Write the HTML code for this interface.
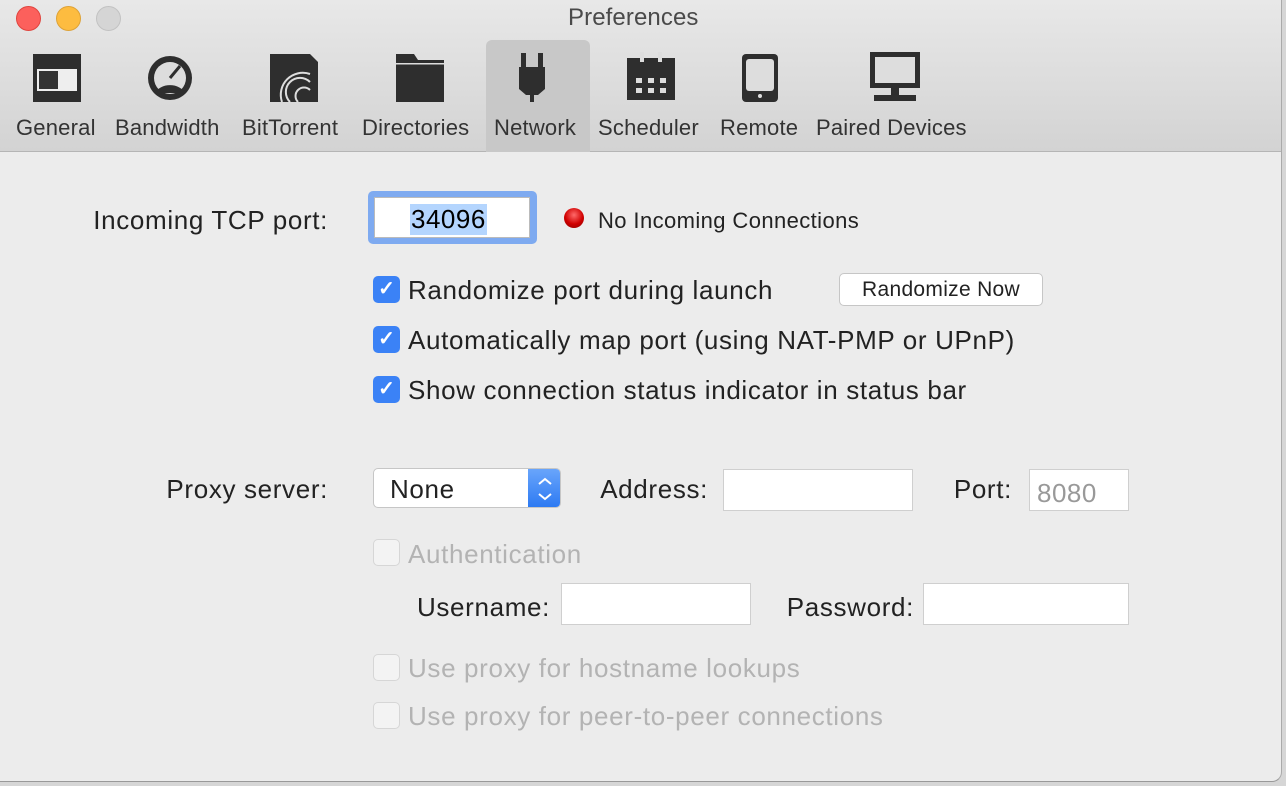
<!DOCTYPE html>
<html><head><meta charset="utf-8"><style>
*{margin:0;padding:0;box-sizing:border-box}
body{width:1286px;height:786px;background:#d6d6d6;font-family:"Liberation Sans",sans-serif;position:relative;overflow:hidden;color:#222}
.win{position:absolute;left:0;top:0;width:1282px;height:782px;background:#ececec;border-radius:0 0 10px 0;border-right:1px solid #aaa;border-bottom:1px solid #999;overflow:hidden}
.tb{position:absolute;left:0;top:0;width:100%;height:152px;background:linear-gradient(#e8e8e8,#d3d3d3);border-bottom:1px solid #b5b5b5}
.a{position:absolute;white-space:nowrap}
.r{position:absolute;white-space:nowrap;text-align:right}
.dot{position:absolute;top:6px;width:25px;height:25px;border-radius:50%}
.tl{font-size:22px;letter-spacing:0.2px;color:#333;top:115px}
.sel{position:absolute;left:486px;top:40px;width:104px;height:112px;background:#c8c8c8;border-radius:6px 6px 0 0}
.lab{font-size:26px;letter-spacing:0.65px;color:#222}
.cb{position:absolute;width:27px;height:27px;border-radius:5px;background:#3b82f6;color:#fff;font-size:20px;text-align:center;line-height:27px;font-weight:bold}
.cbd{position:absolute;width:27px;height:27px;border-radius:5px;background:#f3f3f3;border:1px solid #d6d6d6}
.dis{color:#b3b3b3}
.fld{position:absolute;background:#fff;border:1px solid #cfcfcf}
</style></head><body>
<div class="win">
<div class="tb"></div>
<div class="dot" style="left:16px;background:#fc605c;border:1px solid #e0443e"></div>
<div class="dot" style="left:56px;background:#fdbc40;border:1px solid #dea236"></div>
<div class="dot" style="left:96px;background:#d5d5d5;border:1px solid #c2c2c2"></div>
<div class="a" style="left:568px;top:4px;font-size:24px;letter-spacing:0.1px;color:#4a4a4a">Preferences</div>
<div class="sel"></div>
<svg class="a" style="left:0;top:48px" width="1000" height="58" viewBox="0 0 1000 58">
<g fill="#2e2e2e">
<rect x="33" y="6" width="48" height="48"/>
<rect x="37" y="21" width="40" height="22" fill="#eee"/><rect x="39" y="23" width="19" height="18" fill="#333"/>
<circle cx="170" cy="30" r="22"/><circle cx="170" cy="30" r="16" fill="#ddd"/><path d="M155 45a16 12 0 0 1 30 0z"/><path d="M170 30l10-12" stroke="#2e2e2e" stroke-width="3"/>
<path d="M270 6h40l8 8v40h-48z"/><path d="M282 54a22 22 0 0 1 28-28M290 54a14 14 0 0 1 20-20M298 54a6 6 0 0 1 12-12" stroke="#ddd" stroke-width="2" fill="none"/>
<path d="M396 6h18l4 6h26v42h-48z"/><rect x="396" y="15" width="48" height="1.5" fill="#ddd"/>
<rect x="521" y="5" width="5" height="14"/><rect x="538" y="5" width="5" height="14"/><path d="M519 19h26v22l-7 6h-12l-7-6z"/><rect x="530" y="46" width="4" height="8"/>
<path d="M627 10h48v42h-48z"/><rect x="640" y="4" width="4" height="10" fill="#ddd"/><rect x="658" y="4" width="4" height="10" fill="#ddd"/>
<g fill="#ddd"><rect x="636" y="30" width="6" height="5"/><rect x="648" y="30" width="6" height="5"/><rect x="660" y="30" width="6" height="5"/><rect x="636" y="40" width="6" height="5"/><rect x="648" y="40" width="6" height="5"/><rect x="660" y="40" width="6" height="5"/></g>
<rect x="742" y="6" width="36" height="48" rx="4"/><rect x="746" y="11" width="28" height="32" rx="3" fill="#ddd"/><circle cx="760" cy="48" r="2" fill="#ddd"/>
<rect x="870" y="4" width="50" height="36"/><rect x="875" y="9" width="40" height="26" fill="#ddd"/><rect x="891" y="40" width="8" height="8"/><rect x="874" y="47" width="42" height="6"/>
</g></svg>
<div class="a tl" style="left:16px">General</div>
<div class="a tl" style="left:115px">Bandwidth</div>
<div class="a tl" style="left:242px">BitTorrent</div>
<div class="a tl" style="left:362px">Directories</div>
<div class="a tl" style="left:494px">Network</div>
<div class="a tl" style="left:598px">Scheduler</div>
<div class="a tl" style="left:720px">Remote</div>
<div class="a tl" style="left:816px">Paired Devices</div>

<div class="r lab" style="right:953px;top:205px">Incoming TCP port:</div>
<div class="a" style="left:368px;top:191px;width:169px;height:53px;border-radius:5px;background:#7eaaf0"></div>
<div class="a" style="left:374px;top:197px;width:156px;height:41px;background:#fff;border:1px solid #bbb"></div>
<div class="a" style="left:410px;top:204px;font-size:26px;letter-spacing:0.5px;color:#000;background:#b4d5fe;padding:0 1px">34096</div>
<div class="a" style="left:564px;top:208px;width:20px;height:20px;border-radius:50%;background:radial-gradient(circle at 50% 35%,#ff6a6a,#d00000 55%,#800 100%)"></div>
<div class="a" style="left:598px;top:208px;font-size:22px;letter-spacing:0.4px">No Incoming Connections</div>

<div class="cb" style="left:373px;top:276px">✓</div>
<div class="a lab" style="left:408px;top:275px">Randomize port during launch</div>
<div class="a" style="left:839px;top:273px;width:204px;height:33px;background:#fff;border:1px solid #c6c6c6;border-radius:5px;font-size:21px;letter-spacing:0.3px;text-align:center;line-height:31px">Randomize Now</div>
<div class="cb" style="left:373px;top:326px">✓</div>
<div class="a lab" style="left:408px;top:325px">Automatically map port (using NAT-PMP or UPnP)</div>
<div class="cb" style="left:373px;top:376px">✓</div>
<div class="a lab" style="left:408px;top:375px">Show connection status indicator in status bar</div>

<div class="r lab" style="right:953px;top:474px">Proxy server:</div>
<div class="a" style="left:373px;top:468px;width:188px;height:40px;background:#fff;border:1px solid #c6c6c6;border-radius:5px;overflow:hidden">
<div class="a lab" style="left:16px;top:5px">None</div>
<div class="a" style="left:154px;top:0;width:34px;height:40px;background:linear-gradient(#69a5fb,#2a78f2)"></div>
<svg class="a" style="left:162px;top:6px" width="18" height="28"><path d="M3 9l6-5 6 5M3 19l6 5 6-5" stroke="#fff" stroke-width="2" fill="none"/></svg>
</div>
<div class="r lab" style="right:573px;top:474px">Address:</div>
<div class="fld" style="left:723px;top:469px;width:190px;height:42px"></div>
<div class="r lab" style="right:269px;top:474px">Port:</div>
<div class="fld" style="left:1029px;top:469px;width:100px;height:42px"></div>
<div class="a" style="left:1037px;top:478px;font-size:26px;letter-spacing:0.5px;color:#999">8080</div>

<div class="cbd" style="left:373px;top:539px"></div>
<div class="a lab dis" style="left:408px;top:539px">Authentication</div>
<div class="r lab" style="right:731px;top:592px">Username:</div>
<div class="fld" style="left:561px;top:583px;width:190px;height:42px"></div>
<div class="r lab" style="right:367px;top:592px">Password:</div>
<div class="fld" style="left:923px;top:583px;width:206px;height:42px"></div>
<div class="cbd" style="left:373px;top:654px"></div>
<div class="a lab dis" style="left:408px;top:653px">Use proxy for hostname lookups</div>
<div class="cbd" style="left:373px;top:702px"></div>
<div class="a lab dis" style="left:408px;top:701px">Use proxy for peer-to-peer connections</div>
</div>
</body></html>
